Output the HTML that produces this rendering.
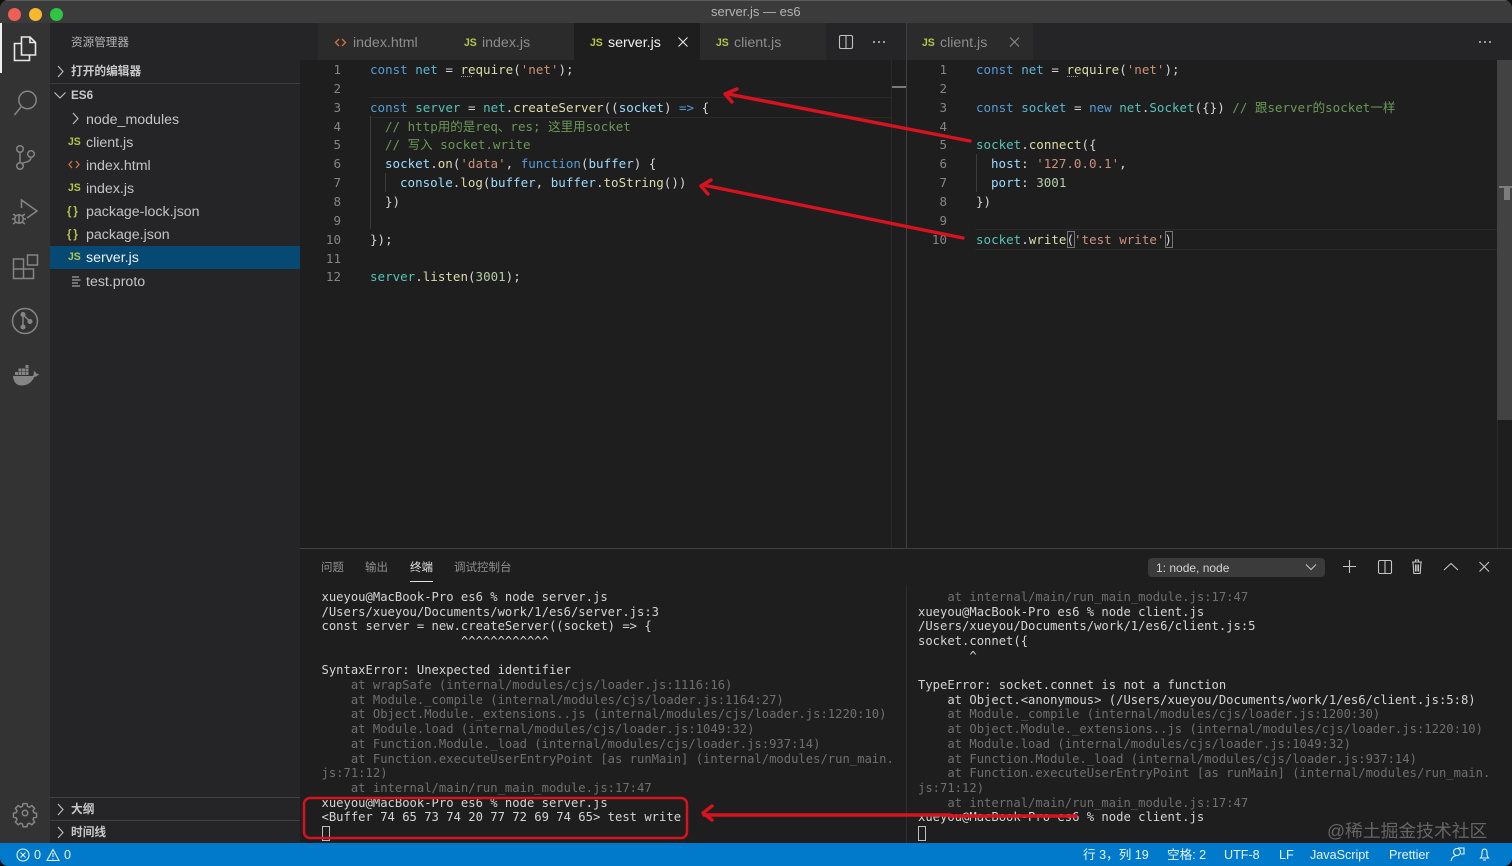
<!DOCTYPE html>
<html lang="zh"><head><meta charset="utf-8"><title>server.js — es6</title>
<style>
html,body{margin:0;padding:0;background:#101012}
#a{position:relative;width:1512px;height:866px;overflow:hidden;background:#1e1e1f;border-radius:8px;filter:blur(.3px);font-family:"Liberation Sans","Noto Sans CJK SC",sans-serif;color:#ccc}
#a div,#a svg{position:absolute}
.t{white-space:pre;line-height:18px;height:18px}
.ui{font-size:14.2px;color:#c4c4c4}
.dim{color:#8d8d8d}
.h{font-size:11.7px;font-weight:700;color:#c8c8c8}
.js{font:700 11px/18px "Liberation Sans",sans-serif;color:#b5c44c;white-space:pre;height:18px;transform:scaleX(.95);transform-origin:0 50%}
.c{font-family:"DejaVu Sans Mono","Noto Sans CJK SC",monospace;font-size:12.52px;line-height:18px;height:18px;margin-top:1px;white-space:pre;color:#d4d4d4}
.n{font-family:"DejaVu Sans Mono",monospace;font-size:12.52px;line-height:18px;height:18px;margin-top:1px;color:#858585;text-align:right;width:30px;white-space:pre}
.m{font-family:"DejaVu Sans Mono","Noto Sans CJK SC",monospace;font-size:12.2px;line-height:15px;height:15px;margin-top:.4px;white-space:pre;color:#d4d4d4}
.g{color:#6f6f6f}
i{font-style:normal}
.k{color:#569cd6}.v{color:#56c2b8}.q{color:#5ab7d4}.p{color:#9cdcfe}.f{color:#dcdcaa}.s{color:#ce9178}.o{color:#6a9955}.b{color:#b5cea8}
.st{font-size:12.6px;line-height:16px;height:16px;color:#e8f3fa;white-space:pre}
.pt{font-size:11.5px;line-height:16px;height:16px;color:#8e8e8e;white-space:pre}
</style></head><body><div id="a">
<!-- title -->
<div style="left:0;top:0;width:1512px;height:23px;background:#3b3b3c"></div>
<div style="left:0;top:0;width:1512px;height:1px;background:#5c5c5c"></div>
<div style="left:8px;top:8px;width:13px;height:13px;border-radius:50%;background:#ee5f58"></div>
<div style="left:29px;top:8px;width:13px;height:13px;border-radius:50%;background:#f5b82e"></div>
<div style="left:50px;top:8px;width:13px;height:13px;border-radius:50%;background:#2fc443"></div>
<div class="t" style="left:711px;top:3px;font-size:13px;color:#b4b4b4">server.js — es6</div>
<!-- activity -->
<div style="left:0;top:23px;width:50px;height:820px;background:#333334"></div>
<div style="left:0;top:23px;width:2px;height:50px;background:#f0f0f0"></div>
<svg style="left:0;top:23px" width="50" height="820" fill="none" stroke="#858585" stroke-width="1.5">
<g stroke="#e8e8e8" stroke-width="1.6"><path d="M21.500 14h8.500l5.500 5.500V32h-14z"/><path d="M30 14v5.500h5.500"/><path d="M21.500 20.500H14.500V37.500H29.500V32"/></g>
<circle cx="27.500" cy="77" r="8.700"/><path d="M21 84L14.500 92"/>
<circle cx="20" cy="126" r="3.300"/><circle cx="20" cy="143" r="3.300"/><circle cx="31" cy="131" r="3.300"/><path d="M20 129.300v10.400M31 134.300c0 5-6 4.500-10 6.500"/>
<path d="M21.500 185V177L37 188 27 195"/><circle cx="19" cy="196" r="4.300"/><path d="M13 191l3 2M25 191l-3 2M12 196h3M26 196h-3M13 201l3-2M25 201l-3-2M19 192v8"/>
<path d="M13.500 236h10v10h-10zM13.500 246h10v9.500h-10zM23.500 246h10v9.500h-10zM27.500 232h10v10h-10z"/>
<circle cx="25" cy="298" r="12.500"/><circle cx="23" cy="291.500" r="1.800" fill="#858585"/><circle cx="23" cy="304" r="1.800" fill="#858585"/><circle cx="30" cy="298.500" r="1.800" fill="#858585"/><path d="M23 291.500v12.500M23 291.500l7 7"/>
<path stroke="none" fill="#858585" d="M13 353h20c1-1.500 1-3.500.5-5 1.500 .4 2.500 1.500 3 2.800 1 .2 2 .1 2.500-.2-.6 2-2.500 3-4.500 3.200-2.500 5.500-7 8.700-13 8.700-5.500 0-8-4-8.500-9.500z"/>
<path fill="#858585" stroke="none" d="M15 349h3v3h-3zM18.500 349h3v3h-3zM22 349h3v3h-3zM25.500 349h3v3h-3zM18.500 345.500h3v3h-3zM22 345.500h3v3h-3zM25.500 345.500h3v3h-3zM25.500 342h3v3h-3z"/>
<g transform="translate(25 790) scale(.78)" stroke-width="1.900"><circle r="3.500"/><path d="M-2.500-12h5l.8 3.500 2.500 1 3-2 3.500 3.500-2 3 1 2.500 3.500.8v5l-3.500.8-1 2.500 2 3-3.500 3.500-3-2-2.500 1-.8 3.500h-5l-.8-3.500-2.500-1-3 2-3.500-3.500 2-3-1-2.500-3.500-.8v-5l3.500-.8 1-2.500-2-3 3.500-3.500 3 2 2.500-1z"/></g>
</svg>
<!-- sidebar -->
<div style="left:50px;top:23px;width:250px;height:820px;background:#252527"></div>
<div class="t h" style="left:71px;top:34px;font-weight:400;font-size:11.6px;color:#b4b4b4">资源管理器</div>
<div style="left:50px;top:83px;width:250px;height:1px;background:#3c3c3e"></div>
<div style="left:50px;top:797px;width:250px;height:1px;background:#414143"></div>
<div style="left:50px;top:820px;width:250px;height:1px;background:#414143"></div>
<div style="left:50px;top:246px;width:250px;height:23px;background:#064a74"></div>
<svg style="left:50px;top:23px" width="250" height="820" fill="none" stroke="#c0c0c0" stroke-width="1.100">
<path d="M8 43l5 5.500-5 5.500M4.500 69.500l5.500 5.500 5.500-5.500M23 90l5 5.500-5 5.500M8 781l5 5.500-5 5.500M8 804l5 5.500-5 5.500"/>
<path stroke="#d2743c" stroke-width="1.300" d="M22 138l-3 3.500 3 3.500M26 138l3 3.500-3 3.500"/>
<path d="M22 254h7M22 257h8.500M22 260h6M22 263h8"/>
</svg>
<div class="t h" style="left:71px;top:63px">打开的编辑器</div>
<div class="t h" style="left:71px;top:87px">ES6</div>
<div class="t h" style="left:71px;top:801px">大纲</div>
<div class="t h" style="left:71px;top:824px">时间线</div>
<div class="t ui" style="left:86px;top:111px">node_modules</div>
<div class="js" style="left:68px;top:133px">JS</div><div class="t ui" style="left:86px;top:134px">client.js</div>
<div class="t ui" style="left:86px;top:157px">index.html</div>
<div class="js" style="left:68px;top:179px">JS</div><div class="t ui" style="left:86px;top:180px">index.js</div>
<div class="js" style="left:67px;top:202px;font-size:12px;letter-spacing:2px">{}</div><div class="t ui" style="left:86px;top:203px">package-lock.json</div>
<div class="js" style="left:67px;top:225px;font-size:12px;letter-spacing:2px">{}</div><div class="t ui" style="left:86px;top:226px">package.json</div>
<div class="js" style="left:68px;top:248px">JS</div><div class="t ui" style="left:86px;top:249px;color:#f0f0f0">server.js</div>
<div class="t ui" style="left:86px;top:273px">test.proto</div>
<!-- tabs -->
<div style="left:300px;top:23px;width:1212px;height:37px;background:#252527"></div>
<div style="left:318px;top:23px;width:256px;height:37px;background:#2b2b2c"></div>
<div style="left:574px;top:23px;width:126px;height:37px;background:#1e1e1f"></div>
<div style="left:700px;top:23px;width:126px;height:37px;background:#2b2b2c"></div>
<div style="left:907px;top:23px;width:126px;height:37px;background:#2b2b2c"></div>
<div style="left:906px;top:23px;width:1px;height:525px;background:#414143"></div>
<svg style="left:300px;top:23px" width="1212" height="37" fill="none" stroke="#c2c2c2" stroke-width="1.100">
<path stroke="#d2743c" stroke-width="1.300" d="M39 16l-3.500 3.500 3.500 3.500M42 16l3.500 3.500-3.500 3.500"/>
<path stroke="#e6e6e6" d="M378.500 14.500l9 9M387.500 14.500l-9 9"/>
<path stroke="#8a8a8a" d="M710 14.500l9 9M719 14.500l-9 9"/>
<rect x="539.500" y="12.500" width="13" height="13" rx="1.500"/><path d="M546 12.500v13"/>
<g stroke="none" fill="#c2c2c2"><circle cx="574" cy="19" r="1"/><circle cx="579" cy="19" r="1"/><circle cx="584" cy="19" r="1"/><circle cx="1180" cy="19" r="1"/><circle cx="1185" cy="19" r="1"/><circle cx="1190" cy="19" r="1"/></g>
</svg>
<div class="t ui dim" style="left:353px;top:34px">index.html</div>
<div class="js" style="left:464px;top:34px">JS</div><div class="t ui dim" style="left:482px;top:34px">index.js</div>
<div class="js" style="left:590px;top:34px">JS</div><div class="t ui" style="left:608px;top:34px;color:#f0f0f0">server.js</div>
<div class="js" style="left:716px;top:34px">JS</div><div class="t ui dim" style="left:734px;top:34px">client.js</div>
<div class="js" style="left:922px;top:34px">JS</div><div class="t ui dim" style="left:940px;top:34px">client.js</div>
<!-- left editor -->
<div style="left:369px;top:97px;width:522px;height:19px;border-top:1px solid #2a2a2b;border-bottom:1px solid #2a2a2b"></div>
<div style="left:370px;top:116px;width:1px;height:113px;background:#3c3c3c"></div>
<div style="left:385px;top:173px;width:1px;height:19px;background:#3c3c3c"></div>
<div style="left:892px;top:86px;width:14px;height:2px;background:#7b7b7b"></div>
<div style="left:891px;top:60px;width:1px;height:488px;background:#2a2a2b"></div>
<div style="left:461px;top:76px;width:11px;height:0;border-top:1.500px dotted #999"></div>
<div class="n" style="left:311px;top:60px">1</div><div class="c" style="left:370px;top:60px"><i class="k">const</i> <i class="q">net</i> = <i class="f">require</i>(<i class="s">'net'</i>);</div>
<div class="n" style="left:311px;top:79px">2</div>
<div class="n" style="left:311px;top:98px">3</div><div class="c" style="left:370px;top:98px"><i class="k">const</i> <i class="v">server</i> = <i class="v">net</i>.<i class="f">createServer</i>((<i class="p">socket</i>) <i class="k">=&gt;</i> {</div>
<div class="n" style="left:311px;top:117px">4</div><div class="c" style="left:385px;top:117px;color:#6a9955">// http用的是req、res; 这里用socket</div>
<div class="n" style="left:311px;top:135px">5</div><div class="c" style="left:385px;top:135px;color:#6a9955">// 写入 socket.write</div>
<div class="n" style="left:311px;top:154px">6</div><div class="c" style="left:385px;top:154px"><i class="p">socket</i>.<i class="f">on</i>(<i class="s">'data'</i>, <i class="k">function</i>(<i class="p">buffer</i>) {</div>
<div class="n" style="left:311px;top:173px">7</div><div class="c" style="left:400px;top:173px"><i class="p">console</i>.<i class="f">log</i>(<i class="p">buffer</i>, <i class="p">buffer</i>.<i class="f">toString</i>())</div>
<div class="n" style="left:311px;top:192px">8</div><div class="c" style="left:385px;top:192px">})</div>
<div class="n" style="left:311px;top:211px">9</div>
<div class="n" style="left:311px;top:230px">10</div><div class="c" style="left:370px;top:230px">});</div>
<div class="n" style="left:311px;top:249px">11</div>
<div class="n" style="left:311px;top:267px">12</div><div class="c" style="left:370px;top:267px"><i class="v">server</i>.<i class="f">listen</i>(<i class="b">3001</i>);</div>
<!-- right editor -->
<div style="left:975px;top:229px;width:522px;height:19px;border-top:1px solid #2a2a2b;border-bottom:1px solid #2a2a2b"></div>
<div style="left:976px;top:154px;width:1px;height:38px;background:#3c3c3c"></div>
<div style="left:1497px;top:60px;width:15px;height:360px;background:#424243"></div>
<div style="left:1499px;top:186px;width:13px;height:2px;background:#7c7c7c"></div>
<div style="left:1504px;top:186px;width:6px;height:14px;background:#7c7c7c"></div>
<div style="left:1497px;top:420px;width:1px;height:128px;background:#2a2a2b"></div>
<div style="left:1067px;top:76px;width:11px;height:0;border-top:1.500px dotted #999"></div>
<div class="n" style="left:917px;top:60px">1</div><div class="c" style="left:976px;top:60px"><i class="k">const</i> <i class="q">net</i> = <i class="f">require</i>(<i class="s">'net'</i>);</div>
<div class="n" style="left:917px;top:79px">2</div>
<div class="n" style="left:917px;top:98px">3</div><div class="c" style="left:976px;top:98px"><i class="k">const</i> <i class="q">socket</i> = <i class="k">new</i> <i class="v">net</i>.<i class="v">Socket</i>({}) <i class="o">// 跟server的socket一样</i></div>
<div class="n" style="left:917px;top:117px">4</div>
<div class="n" style="left:917px;top:135px">5</div><div class="c" style="left:976px;top:135px"><i class="v">socket</i>.<i class="f">connect</i>({</div>
<div class="n" style="left:917px;top:154px">6</div><div class="c" style="left:991px;top:154px"><i class="p">host</i>: <i class="s">'127.0.0.1'</i>,</div>
<div class="n" style="left:917px;top:173px">7</div><div class="c" style="left:991px;top:173px"><i class="p">port</i>: <i class="b">3001</i></div>
<div class="n" style="left:917px;top:192px">8</div><div class="c" style="left:976px;top:192px">})</div>
<div class="n" style="left:917px;top:211px">9</div>
<div class="n" style="left:917px;top:230px">10</div><div class="c" style="left:976px;top:230px"><i class="v">socket</i>.<i class="f">write</i>(<i class="s">'test write'</i>)</div>
<div style="left:1067px;top:231px;width:6px;height:15px;border:1px solid #777"></div>
<div style="left:1165px;top:231px;width:6px;height:15px;border:1px solid #777"></div>
<!-- panel -->
<div style="left:300px;top:548px;width:1212px;height:295px;background:#1e1e1f;border-top:1px solid #414143;box-sizing:border-box"></div>
<div class="pt" style="left:321px;top:560px">问题</div>
<div class="pt" style="left:365px;top:560px">输出</div>
<div class="pt" style="left:410px;top:560px;color:#e2e2e2">终端</div>
<div class="pt" style="left:454px;top:560px">调试控制台</div>
<div style="left:410px;top:581px;width:23px;height:1px;background:#e0e0e0"></div>
<div style="left:1148px;top:558px;width:177px;height:19px;border-radius:4px;background:#3b3b3c"></div>
<div class="pt" style="left:1156px;top:560px;color:#d4d4d4;font-size:12px">1: node, node</div>
<div style="left:906px;top:585px;width:1px;height:258px;background:#2e2e2f"></div>
<svg style="left:1300px;top:553px" width="212" height="30" fill="none" stroke="#c4c4c4" stroke-width="1.100">
<path d="M6 11.500l5 5 5-5M49.500 7v13M43 13.500h13M144 17l7-6.500 7 6.500M179.500 9l9.500 9.500M189 9l-9.500 9.500"/>
<rect x="78.500" y="7.500" width="13" height="13" rx="1.500"/><path d="M85 7.500v13"/>
<path d="M112 9h10M113 9l.8 11.500h6.400L121 9M115.500 9V7h3v2M115.500 11.500v7M117 11.500v7M118.500 11.500v7"/>
</svg>
<!-- term left -->
<div class="m" style="left:321.500px;top:589.500px">xueyou@MacBook-Pro es6 % node server.js</div>
<div class="m" style="left:321.500px;top:604.200px">/Users/xueyou/Documents/work/1/es6/server.js:3</div>
<div class="m" style="left:321.500px;top:618.900px">const server = new.createServer((socket) =&gt; {</div>
<div class="m" style="left:321.500px;top:633.600px">                   ^^^^^^^^^^^^</div>
<div class="m" style="left:321.500px;top:663px">SyntaxError: Unexpected identifier</div>
<div class="m g" style="left:321.500px;top:677.700px">    at wrapSafe (internal/modules/cjs/loader.js:1116:16)</div>
<div class="m g" style="left:321.500px;top:692.400px">    at Module._compile (internal/modules/cjs/loader.js:1164:27)</div>
<div class="m g" style="left:321.500px;top:707.100px">    at Object.Module._extensions..js (internal/modules/cjs/loader.js:1220:10)</div>
<div class="m g" style="left:321.500px;top:721.800px">    at Module.load (internal/modules/cjs/loader.js:1049:32)</div>
<div class="m g" style="left:321.500px;top:736.500px">    at Function.Module._load (internal/modules/cjs/loader.js:937:14)</div>
<div class="m g" style="left:321.500px;top:751.200px">    at Function.executeUserEntryPoint [as runMain] (internal/modules/run_main.</div>
<div class="m g" style="left:321.500px;top:765.900px">js:71:12)</div>
<div class="m g" style="left:321.500px;top:780.600px">    at internal/main/run_main_module.js:17:47</div>
<div class="m" style="left:321.500px;top:795.300px">xueyou@MacBook-Pro es6 % node server.js</div>
<div class="m" style="left:321.500px;top:810px">&lt;Buffer 74 65 73 74 20 77 72 69 74 65&gt; test write</div>
<div style="left:321.500px;top:826px;width:6px;height:13px;border:1px solid #bdbdbd"></div>
<!-- term right -->
<div class="m g" style="left:918px;top:589.500px">    at internal/main/run_main_module.js:17:47</div>
<div class="m" style="left:918px;top:604.200px">xueyou@MacBook-Pro es6 % node client.js</div>
<div class="m" style="left:918px;top:618.900px">/Users/xueyou/Documents/work/1/es6/client.js:5</div>
<div class="m" style="left:918px;top:633.600px">socket.connet({</div>
<div class="m" style="left:918px;top:648.300px">       ^</div>
<div class="m" style="left:918px;top:677.700px">TypeError: socket.connet is not a function</div>
<div class="m" style="left:918px;top:692.400px">    at Object.&lt;anonymous&gt; (/Users/xueyou/Documents/work/1/es6/client.js:5:8)</div>
<div class="m g" style="left:918px;top:707.100px">    at Module._compile (internal/modules/cjs/loader.js:1200:30)</div>
<div class="m g" style="left:918px;top:721.800px">    at Object.Module._extensions..js (internal/modules/cjs/loader.js:1220:10)</div>
<div class="m g" style="left:918px;top:736.500px">    at Module.load (internal/modules/cjs/loader.js:1049:32)</div>
<div class="m g" style="left:918px;top:751.200px">    at Function.Module._load (internal/modules/cjs/loader.js:937:14)</div>
<div class="m g" style="left:918px;top:765.900px">    at Function.executeUserEntryPoint [as runMain] (internal/modules/run_main.</div>
<div class="m g" style="left:918px;top:780.600px">js:71:12)</div>
<div class="m g" style="left:918px;top:795.300px">    at internal/main/run_main_module.js:17:47</div>
<div class="m" style="left:918px;top:810px">xueyou@MacBook-Pro es6 % node client.js</div>
<div style="left:918px;top:826px;width:6px;height:13px;border:1px solid #bdbdbd"></div>
<div class="t" style="left:1327px;top:821px;font-size:17.800px;line-height:20px;color:#656565">@稀土掘金技术社区</div>
<!-- status -->
<div style="left:0;top:843px;width:1512px;height:23px;background:#017acb"></div>
<svg style="left:0;top:843px" width="80" height="23" fill="none" stroke="#e8f3fa" stroke-width="1.100">
<circle cx="23" cy="12" r="6"/><path d="M20.500 9.500l5 5M25.500 9.500l-5 5M53 6.500l6 11H47zM53 10v4M53 15.500v1"/>
</svg>
<div class="st" style="left:34px;top:847px">0</div>
<div class="st" style="left:64px;top:847px">0</div>
<div class="st" style="left:1083px;top:847px">行 3，列 19</div>
<div class="st" style="left:1167px;top:847px">空格: 2</div>
<div class="st" style="left:1224px;top:847px">UTF-8</div>
<div class="st" style="left:1279px;top:847px">LF</div>
<div class="st" style="left:1310px;top:847px">JavaScript</div>
<div class="st" style="left:1389px;top:847px">Prettier</div>
<svg style="left:1445px;top:843px" width="60" height="23" fill="none" stroke="#e8f3fa" stroke-width="1.100">
<circle cx="12" cy="9" r="3.500"/><path d="M6 18c1-4 3-5.500 6-5.500M13 5h6v6h-3"/>
<path d="M43.500 15h-8c1.500-1.500 1.500-3 1.500-5 0-2.500 1-4 2.500-4s2.500 1.500 2.500 4c0 2 0 3.500 1.500 5zM38 17h3"/>
</svg>
<!-- red annotations -->
<svg style="left:0;top:0" width="1512" height="866" fill="none" stroke="#d8121f" stroke-linecap="round" stroke-linejoin="round">
<path stroke-width="3.400" d="M970 141L728 94M963 238L703 185M1076 816H950M950 815H704"/>
<path stroke-width="3.400" d="M737 89L725 94l7 8M711 180l-10 6 7 8M712 806l-9 7 9 7"/>
<rect x="304" y="798" width="383" height="40" rx="6" stroke-width="2.500"/>
</svg>
</div></body></html>
